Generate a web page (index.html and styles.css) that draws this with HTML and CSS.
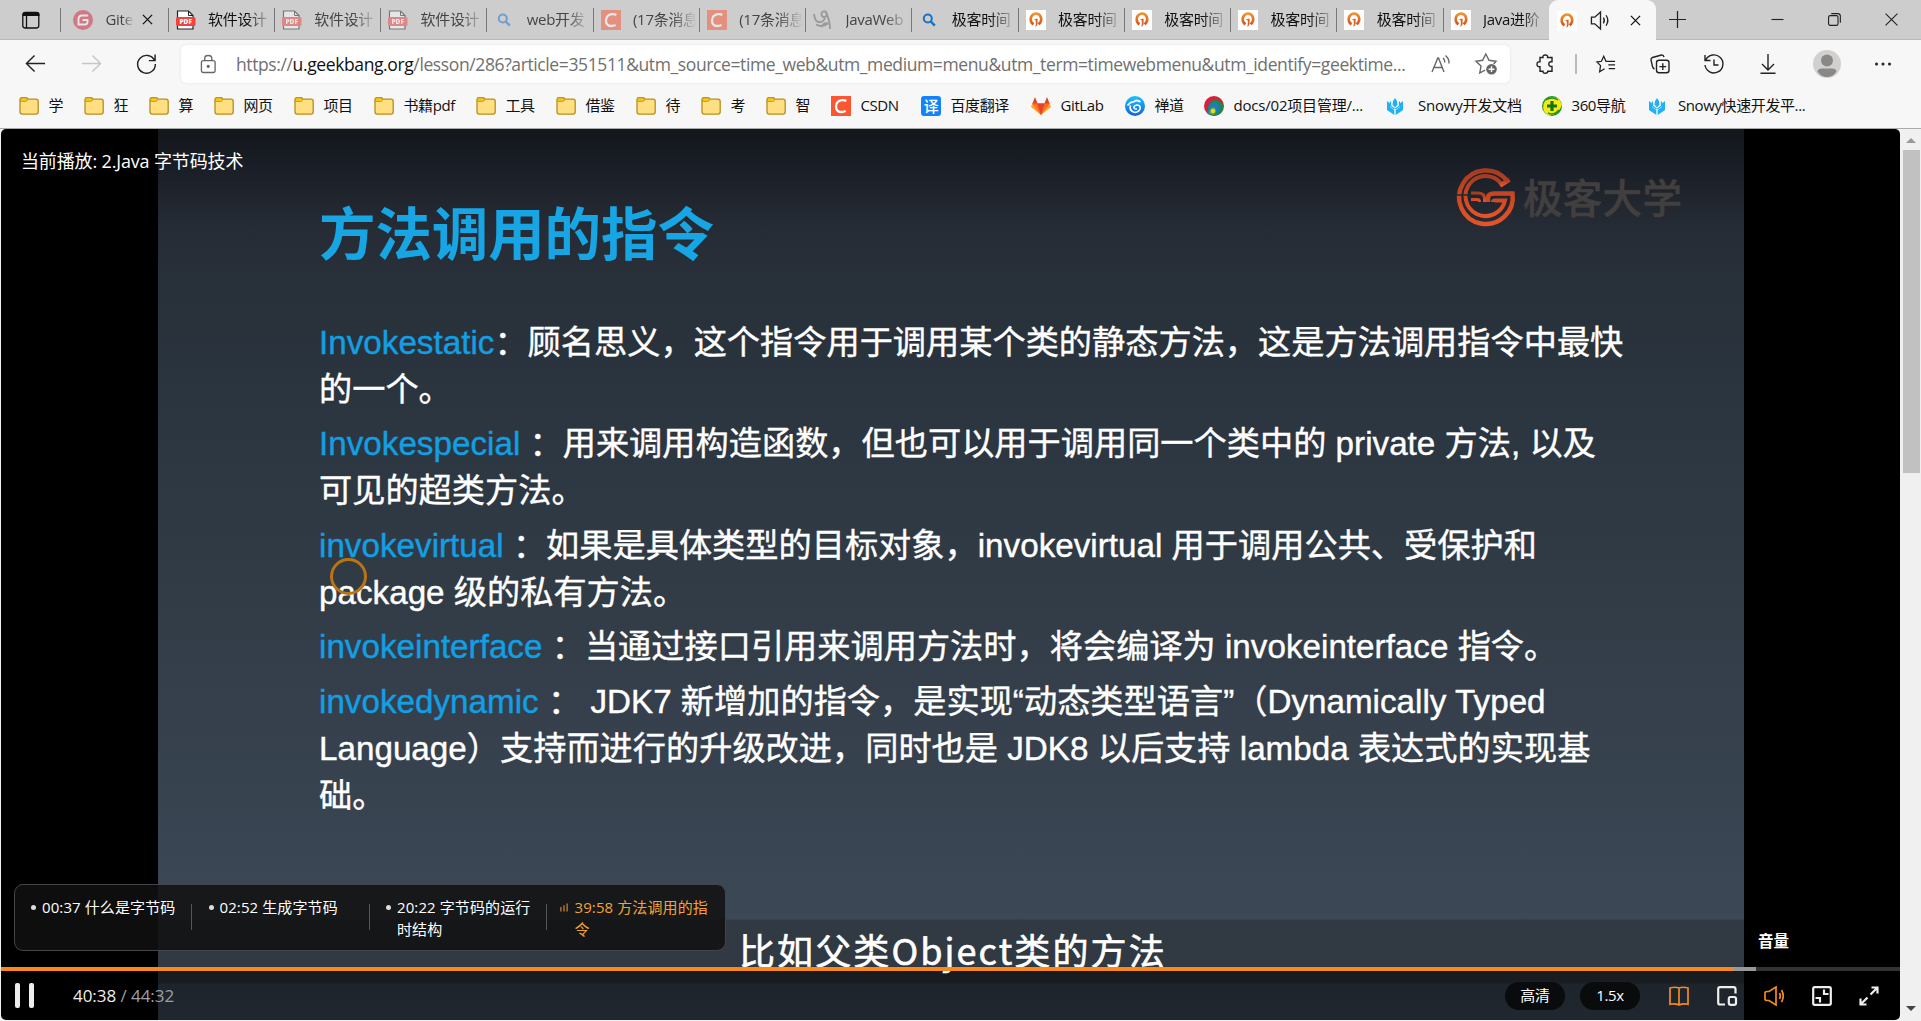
FILE: index.html
```html
<!DOCTYPE html>
<html lang="zh-CN">
<head>
<meta charset="utf-8">
<title>2.Java 字节码技术</title>
<link rel="stylesheet" href="styles.css">
</head>
<body>
<svg class="defs" width="0" height="0">
  <defs>
    <linearGradient id="og" x1="0" y1="0" x2="0" y2="1"><stop offset="0" stop-color="#f0932b"/><stop offset="1" stop-color="#d9531e"/></linearGradient>
    <linearGradient id="cg" x1="0" y1="0" x2="0" y2="1"><stop offset="0" stop-color="#19c2fb"/><stop offset="1" stop-color="#1263dc"/></linearGradient>
    <linearGradient id="lg" x1="0" y1="0" x2="0" y2="1"><stop offset="0" stop-color="#a43c22"/><stop offset=".5" stop-color="#cc4722"/><stop offset="1" stop-color="#e4532a"/></linearGradient>
    <symbol id="folder" viewBox="0 0 20 20"><path d="M1 4.2Q1 1.6 3 1.6H7Q8.6 1.6 8.8 3.2H17Q19.2 3.2 19.2 5.400V15.800Q19.200 18.200 17 18.200H3.200Q1 18.200 1 15.800Z" fill="#ffdf82" stroke="#b58f1e" stroke-width="1.300"/><path d="M1.300 4.200Q1.300 1.800 3 1.800H7Q8.500 1.800 8.500 3.600Q8.300 5.400 6.500 5.400H1.300Z" fill="#f9c816" stroke="#b58f1e" stroke-width=".8"/></symbol>
    <symbol id="pdf" viewBox="0 0 20 20"><path d="M1.500 9V1H12.500L17 5.500V19H1.500V15" fill="#fff" stroke="#222" stroke-width="1.200"/><path d="M12.500 1V5.500H17" fill="none" stroke="#222"/><rect x="0" y="7" width="19.500" height="9" rx="1.500" fill="#f3413e"/><text x="9.700" y="14" text-anchor="middle" class="pdf-t">PDF</text></symbol>
    <symbol id="geek" viewBox="0 0 20 20"><rect width="20" height="20" fill="#fff"/><path d="M7.500 14.300A5.300 5.700 0 1 1 14.200 12.600L12.600 14.200" fill="none" stroke="url(#og)" stroke-width="2.700"/><path d="M8 9.300L11.600 8.600V14Q11.400 16 9 16.800Q9.800 15.500 9.800 14V10.400Z" fill="#dd6321"/></symbol>
    <symbol id="search" viewBox="0 0 20 20"><circle cx="8.800" cy="8.500" r="4" fill="none" stroke="#1673c8" stroke-width="2"/><path d="M11.800 11.500L15.800 15.700" stroke="#1673c8" stroke-width="2.400"/></symbol>
    <symbol id="csdn" viewBox="0 0 20 20"><rect width="20" height="20" fill="#fc5531"/><path d="M15.300 4.900Q13.500 4 11 4.200Q5.300 4.800 5 10.500Q5 16 10 16Q12.500 16 14.600 15" fill="none" stroke="#fff" stroke-width="2.300"/></symbol>
    <symbol id="snowy" viewBox="0 0 20 20"><path d="M9 2Q11.500 4.500 11.500 8.500L9 11.500L6.500 8.500Q6.500 4.500 9 2ZM1 5L4 7.500V11L8.300 14V19L1 14ZM17 5L14 7.500V11L9.700 14V19L17 14Z" fill="#1fb0f5"/><path d="M4.500 5.500V10L8.500 13M13.500 5.500V10L9.500 13" fill="none" stroke="#1fb0f5" stroke-width="1.300"/></symbol>
  </defs>
</svg>

<div class="browser">
  <div class="tabs">
    <div class="tab-menu"><svg width="20" height="20" viewBox="0 0 20 20"><rect x="1.800" y="2.500" width="16" height="15.500" rx="2.500" fill="none" stroke="#111" stroke-width="1.300"/><path d="M1.500 6V4Q1.500 2 4 2H16Q18.500 2 18.500 4V6Z" fill="#111"/><path d="M5.500 6V18" stroke="#111" stroke-width="1.300"/></svg></div>
    <div class="tab first"><svg class="fav dim" viewBox="0 0 20 20"><circle cx="10" cy="10" r="10" fill="#d3263f"/><path d="M15.200 5.500H9Q5.500 5.500 5.500 9V14.500H12Q14.500 14.500 14.500 12V10H9.500" fill="none" stroke="#fff" stroke-width="1.900"/></svg><span class="label gray short">Gite</span><svg class="close" viewBox="0 0 12 12"><path d="M1 1L11 11M11 1L1 11"/></svg></div>
    <div class="tab"><svg class="fav"><use href="#pdf"/></svg><span class="label">软件设计</span></div>
    <div class="tab"><svg class="fav dim"><use href="#pdf"/></svg><span class="label gray">软件设计</span></div>
    <div class="tab"><svg class="fav dim"><use href="#pdf"/></svg><span class="label gray">软件设计</span></div>
    <div class="tab"><svg class="fav dim"><use href="#search"/></svg><span class="label gray">web开发</span></div>
    <div class="tab"><svg class="fav dim"><use href="#csdn"/></svg><span class="label gray">(17条消息</span></div>
    <div class="tab"><svg class="fav dim"><use href="#csdn"/></svg><span class="label gray">(17条消息</span></div>
    <div class="tab"><svg class="fav" viewBox="0 0 20 20" fill="none" stroke="#999" stroke-width="1.800"><path d="M1 4Q2 11 5 12Q10 13 12 8M12.500 1.500Q8 1 8.500 5Q9.500 8 13 6.500Q15 4 12.500 1.500Q17 10 17 19M8.500 17Q11 12 15 13.500M3 14.500Q9 18 15 13.500"/></svg><span class="label gray">JavaWeb</span></div>
    <div class="tab"><svg class="fav"><use href="#search"/></svg><span class="label">极客时间</span></div>
    <div class="tab"><svg class="fav"><use href="#geek"/></svg><span class="label">极客时间</span></div>
    <div class="tab"><svg class="fav"><use href="#geek"/></svg><span class="label">极客时间</span></div>
    <div class="tab"><svg class="fav"><use href="#geek"/></svg><span class="label">极客时间</span></div>
    <div class="tab"><svg class="fav"><use href="#geek"/></svg><span class="label">极客时间</span></div>
    <div class="tab"><svg class="fav"><use href="#geek"/></svg><span class="label">Java进阶</span></div>
    <div class="tab active"><svg class="fav"><use href="#geek"/></svg><svg class="sound" viewBox="0 0 22 22"><path d="M1.500 7.500H5L11 2V20L5 14.500H1.500ZM14 8Q16 11 14 14M16.800 5.500Q20.500 11 16.800 16.500"/></svg><svg class="close" viewBox="0 0 12 12"><path d="M1 1L11 11M11 1L1 11"/></svg></div>
    <svg class="plus" viewBox="0 0 18 18"><path d="M9 0V18M0 9H18"/></svg>
    <div class="win">
      <svg viewBox="0 0 14 14"><path d="M.5 7H13.500"/></svg>
      <svg viewBox="0 0 14 14"><rect x=".6" y="2.800" width="10.200" height="10.500" rx="1.800"/><path d="M3.500 .7H10.500Q13.300 .7 13.300 3.500V10.500"/></svg>
      <svg viewBox="0 0 14 14"><path d="M.6 .6L13.400 13.400M13.400 .6L.6 13.400"/></svg>
    </div>
  </div>

  <div class="toolbar">
    <div class="nav">
      <svg viewBox="0 0 22 22"><path d="M21 11H1.500M10 2.500L1.500 11L10 19.500"/></svg>
      <svg class="off" viewBox="0 0 22 22"><path d="M1 11H20.500M12 2.500L20.500 11L12 19.500"/></svg>
      <svg viewBox="0 0 22 22"><path d="M19.500 8A9.300 9.300 0 1 0 20.300 11.500M20 1.500V8H13.500"/></svg>
    </div>
    <div class="address">
      <svg class="lock" viewBox="0 0 18 20"><rect x="1.500" y="6.500" width="14.500" height="12.500" rx="2"/><path d="M5 6.500V4Q5 1 8.700 1T12.500 4V6.500"/><circle cx="8.700" cy="12.500" r="1" fill="#555"/></svg>
      <div class="url">https://<b>u.geekbang.org</b>/lesson/286?article=351511&amp;utm_source=time_web&amp;utm_medium=menu&amp;utm_term=timewebmenu&amp;utm_identify=geektime...</div>
      <svg class="aloud" viewBox="0 0 20 20"><path d="M1 18L6.800 4H7.500L13 18M3 13.500H11.300M12 4Q14 6 13.800 8.500M14.500 1.500Q18.500 5 18 9.500"/></svg>
      <svg class="star" viewBox="0 0 22 22"><path d="M18.700 11L21 8.300L14 7.300L10.800 1L7.600 7.300L1 8.300L6 13L4.800 20L10 17.200"/><circle cx="16.500" cy="16.200" r="5.300" fill="#666" stroke="none"/><path d="M16.500 13.300V19.100M13.600 16.200H19.400" stroke="#fff"/></svg>
    </div>
    <div class="tools">
      <svg viewBox="0 0 20 20"><path d="M5 3.500H8Q7.500 1 10.300 1T12.500 3.500H17V7.800Q13.800 7.300 13.800 10T17 12.500V17.300H12.800Q12.800 19.300 10.300 19.300T8 17.300H5V12.800Q2 13 2 10.300T5 7.800Z"/></svg>
      <i class="sep"></i>
      <svg viewBox="0 0 22 20"><path d="M14 7H11L8.500 1.500L6 7L1 7.800L5 11.800L4 18.500L9.500 15.300M12.500 7H21M13.500 11H21M14 15H21"/></svg>
      <svg viewBox="0 0 20 20"><rect x="6.500" y="6.300" width="12.500" height="12.500" rx="2.500"/><path d="M12.800 9.200V16M9.400 12.600H16.200M4.500 15Q3 14.500 2.500 12.500L1 6Q.8 4 2.500 3.500L11.500 1Q13.500 .8 14 3"/></svg>
      <svg viewBox="0 0 20 20"><path d="M1 1V6.500H6.500M1.800 6A9 9 0 1 1 1 11M10 5.500V11H14.500"/></svg>
      <svg viewBox="0 0 20 20"><path d="M10 0V15.500M4 10L10 16L16 10M2.500 19.300H17.500"/></svg>
      <svg class="avatar" viewBox="0 0 28 28"><circle cx="14" cy="14" r="14" fill="#d2d0ce" stroke="none"/><circle cx="14" cy="10.500" r="6" fill="#8a8886" stroke="none"/><path d="M4.500 21.500Q5 18.500 9 18.500H19Q23 18.500 23.500 21.500Q20 27 14 27T4.500 21.500Z" fill="#8a8886" stroke="none"/></svg>
      <svg viewBox="0 0 20 20"><g fill="#222" stroke="none"><circle cx="3.500" cy="10" r="1.500"/><circle cx="10" cy="10" r="1.500"/><circle cx="16.500" cy="10" r="1.500"/></g></svg>
    </div>
  </div>

  <div class="bookmarks">
    <span class="bm w15"><svg><use href="#folder"/></svg>学</span>
    <span class="bm w15"><svg><use href="#folder"/></svg>狂</span>
    <span class="bm w15"><svg><use href="#folder"/></svg>算</span>
    <span class="bm w30"><svg><use href="#folder"/></svg>网页</span>
    <span class="bm w30"><svg><use href="#folder"/></svg>项目</span>
    <span class="bm wpdf"><svg><use href="#folder"/></svg>书籍pdf</span>
    <span class="bm w30"><svg><use href="#folder"/></svg>工具</span>
    <span class="bm w30"><svg><use href="#folder"/></svg>借鉴</span>
    <span class="bm w15"><svg><use href="#folder"/></svg>待</span>
    <span class="bm w15"><svg><use href="#folder"/></svg>考</span>
    <span class="bm w15"><svg><use href="#folder"/></svg>智</span>
    <span class="bm wcsdn"><svg><use href="#csdn"/></svg>CSDN</span>
    <span class="bm wfy"><svg viewBox="0 0 20 20"><rect width="20" height="20" rx="3" fill="#1283fb"/><text x="10" y="15.500" text-anchor="middle" class="yi">译</text></svg>百度翻译</span>
    <span class="bm wgit"><svg viewBox="0 0 20 20"><path d="M10 19L0 11L1.300 7.500H18.700L20 11Z" fill="#fca326"/><path d="M10 19L1.300 7.500H18.700Z" fill="#fc6d26"/><path d="M1.300 7.800L4 1L6.700 7.800ZM18.700 7.800L16 1L13.300 7.800ZM10 19L6.300 7.500H13.700Z" fill="#e24329"/></svg>GitLab</span>
    <span class="bm w30 zen"><svg viewBox="0 0 20 20"><circle cx="10" cy="10" r="10" fill="url(#cg)"/><path d="M2.500 9.500Q6 5.500 8.500 6Q11.500 3 15.500 6M9 12.500Q8.500 9.500 12 9Q16 9.500 15 13Q13 17.300 8.500 16Q4 14 5.500 9.500M12 13H9.500" fill="none" stroke="#fff" stroke-width="1.700"/></svg>禅道</span>
    <span class="bm wdocs"><svg viewBox="0 0 20 20"><circle cx="10" cy="10" r="10" fill="#d4213c"/><path d="M3 17A10 10 0 0 0 19 14Q20 6 13 4Q4 3 3 17Z" fill="#178b4b"/><path d="M4 18Q3 7 11 6Q17 8 15 15Q11 20 4 18Z" fill="#1f7ac0"/><path d="M5 18Q5 11 10 11Q14 14 10 19Z" fill="#5da03b"/><circle cx="9" cy="15" r="2.300" fill="#e0dc20"/></svg>docs/02项目管理/...</span>
    <span class="bm wsn1"><svg><use href="#snowy"/></svg>Snowy开发文档</span>
    <span class="bm w360"><svg viewBox="0 0 20 20"><circle cx="10" cy="10" r="10" fill="#21901c"/><path d="M15 2Q5-1 1.500 8Q0 16 6 19Q14 20 18 13L20 9Q18 3 15 2Z" fill="#f6ea14"/><path d="M16 4Q10 0 4 4M17 14Q12 20 6 17" stroke="#21901c" stroke-width="1.500" fill="none"/><path d="M10 5V15M5 10H15" stroke="#157412" stroke-width="3.200"/></svg>360导航</span>
    <span class="bm wsn2"><svg><use href="#snowy"/></svg>Snowy快速开发平...</span>
  </div>

  <div class="page">
    <div class="player">
      <div class="slide">
        <div class="logo">
          <svg width="60" height="60" viewBox="0 0 60 60" fill="none" stroke="url(#lg)"><path d="M50.500 14A26.800 26.800 0 1 0 56.500 27.500H38Q32 27.500 32 32V36" stroke-width="4.500"/><path d="M45.500 18A20 20 0 1 0 49 34.500H39Q37 34.500 37 36" stroke-width="4"/><path d="M15 27H22Q28.500 27 28.500 32V36M15 33.500H21.500Q23.500 33.500 23.500 36" stroke-width="3"/><path d="M44 19.500L53.500 13.500" stroke-width="4.500"/><path d="M0 29H13" stroke="#222932" stroke-width="1.300"/></svg>
          <span>极客大学</span>
        </div>
        <h1>方法调用的指令</h1>
        <div class="copy">
          <p><em>Invokestatic</em>：顾名思义，这个指令用于调用某个类的静态方法，这是方法调用指令中最快<br>的一个。</p>
          <p><em>Invokespecial</em> ：用来调用构造函数，但也可以用于调用同一个类中的 private 方法, 以及<br>可见的超类方法。</p>
          <p><em>invokevirtual</em> ：如果是具体类型的目标对象，invokevirtual 用于调用公共、受保护和<br>package 级的私有方法。</p>
          <p><em>invokeinterface</em> ：当通过接口引用来调用方法时，将会编译为 invokeinterface 指令。</p>
          <p><em>invokedynamic</em> ： JDK7 新增加的指令，是实现“动态类型语言”（Dynamically Typed<br>Language）支持而进行的升级改进，同时也是 JDK8 以后支持 lambda 表达式的实现基<br>础。</p>
        </div>
        <div class="caption">比如父类Object类的方法</div>
      </div>
      <div class="pointer"></div>
      <div class="playing">当前播放: 2.Java 字节码技术</div>
      <div class="chapters">
        <div class="chapter"><i class="dot"></i><span>00:37 什么是字节码</span></div>
        <div class="chapter"><i class="dot"></i><span>02:52 生成字节码</span></div>
        <div class="chapter"><i class="dot"></i><span>20:22 字节码的运行<br>时结构</span></div>
        <div class="chapter on"><svg class="eq" viewBox="0 0 9 9"><path d="M1 4V9M4.500 2V9M8 0V9"/></svg><span>39:58 方法调用的指<br>令</span></div>
      </div>
      <div class="tip">音量</div>
      <div class="progress"><i class="done"></i><i class="buffer"></i></div>
      <div class="controls">
        <div class="pause"><i></i><i></i></div>
        <div class="time"><b>40:38</b> / 44:32</div>
        <div class="right">
          <span class="pill">高清</span>
          <span class="pill">1.5x</span>
          <svg class="orange book" viewBox="0 0 20 20"><path d="M1 2Q6 .5 10 2Q14 .5 19 2V18.300Q14 17 10 19Q6 17 1 18.300ZM10 2V18.500"/></svg>
          <svg viewBox="0 0 20 20"><path d="M8 18.500H3Q1.200 18.500 1.200 16.700V3Q1.200 1.200 3 1.200H16.500Q18.500 1.200 18.500 3V7.500M12.500 11H17Q19 11 19 13V17Q19 18.800 17 18.800H14Q11.800 18.800 11.800 17V13Q11.800 11 13.500 11Z"/></svg>
          <svg class="orange" viewBox="0 0 20 20"><path d="M1 7Q1 5.500 3 5.500H5L12 1V19L5 14.500H3Q1 14.500 1 13ZM15.500 7Q17 10 15.500 13M17.500 4Q21 10 17.500 16"/></svg>
          <svg viewBox="0 0 20 20"><rect x="1.200" y="1.200" width="17.600" height="17.600" rx="1.500"/><path d="M12 3.500V8H16.500M3.500 12H8V16.500"/></svg>
          <svg viewBox="0 0 20 20"><path d="M12.500 1.500H18.500V7.500M18 2L11.500 8.500M1.500 12.500V18.500H7.500M2 18L8.500 11.500"/></svg>
        </div>
      </div>
    </div>
    <div class="scroll"><i class="up"></i><i class="thumb"></i><i class="down"></i></div>
  </div>
</div>
</body>
</html>
```
FILE: styles.css
```css
* { box-sizing: border-box; }
body { margin: 0; width: 1921px; height: 1021px; overflow: hidden; background: #f7f7f7; color: #111; font: 15px/20px "Open Sans", "Noto Sans CJK SC", sans-serif; }
svg { flex: none; overflow: visible; }
.defs { position: absolute; }
.pdf-t { font: 800 6.5px "Open Sans", sans-serif; fill: #fff; }
.yi { font: 500 15px "Noto Sans CJK SC", sans-serif; fill: #fff; }
.browser { display: flex; flex-direction: column; height: 1021px; }

/* tab strip */
.tabs { display: flex; align-items: center; height: 40px; background: #cdcdcd; border-bottom: 1px solid #b9b9b9; }
.tab-menu { width: 60px; padding-left: 21px; height: 20px; }
.tab { display: flex; align-items: center; width: 106.25px; height: 24px; padding-left: 7px; border-left: 1.500px solid #777; }
.tab.first { width: 107.500px; padding-left: 12px; }
.fav { width: 20px; height: 20px; }
.dim { opacity: .5; }
.label { width: 64px; height: 21px; margin-left: 12.500px; white-space: nowrap; letter-spacing: -.3px; -webkit-mask-image: linear-gradient(90deg, #000 60%, transparent 100%); mask-image: linear-gradient(90deg, #000 60%, transparent 100%); }
.label.short { width: 28px; }
.gray { color: #444; }
.close { width: 11px; height: 11px; fill: none; stroke: #111; stroke-width: 1.400; margin-left: 8px; }
.tab.active { width: 107px; height: 41px; margin-bottom: -2px; padding-left: 8px; background: #f7f7f7; border: 0; border-radius: 9px 9px 0 0; }
.sound { width: 21px; height: 21px; margin-left: 13px; fill: none; stroke: #222; stroke-width: 1.400; }
.active .close { margin-left: 19px; }
.plus { width: 17px; height: 17px; margin-left: 13px; fill: none; stroke: #222; stroke-width: 1.300; }
.win { display: flex; gap: 44px; margin-left: 85px; }
.win svg { width: 13px; height: 13px; fill: none; stroke: #222; stroke-width: 1.200; }

/* navigation bar */
.toolbar { display: flex; align-items: center; height: 47px; padding-left: 25px; }
.nav { display: flex; gap: 34.500px; width: 156px; }
.nav svg { width: 21px; height: 21px; fill: none; stroke: #222; stroke-width: 1.500; }
.nav .off { stroke: #c6c6c6; }
.address { display: flex; align-items: center; width: 1329px; height: 38px; padding-left: 19px; border-radius: 6px; background: #fff; box-shadow: 0 0 3px #e2e2e2; }
.address svg { fill: none; stroke: #666; stroke-width: 1.400; }
.lock { width: 17px; height: 20px; }
.url { width: 1195px; margin-left: 19px; white-space: nowrap; color: #707070; font-size: 17.500px; letter-spacing: -.385px; }
.url b { font-weight: 400; color: #111; }
.aloud { width: 20px; height: 20px; }
.star { width: 22px; height: 22px; margin-left: 24px; }
.tools { display: flex; align-items: center; gap: 34.200px; padding-left: 25px; }
.tools svg { width: 20px; height: 20px; fill: none; stroke: #222; stroke-width: 1.400; }
.tools .avatar { width: 28px; height: 28px; }
.tools svg:last-child { margin-left: -2px; }
.sep { width: 2px; height: 20px; background: #bbb; margin: 0 -15px 0 -14.500px; }

/* bookmarks */
.bookmarks { display: flex; height: 42px; padding: 8px 0 0 19px; border-bottom: 1px solid #aaa; }
.bm { display: flex; align-items: center; gap: 9.500px; flex: none; height: 21px; white-space: nowrap; letter-spacing: -.4px; line-height: 21px; }
.bm svg { width: 20px; height: 20px; }
.w15 { width: 65px; } .w30 { width: 80px; } .wpdf { width: 102px; } .wcsdn { width: 90px; } .wfy { width: 110px; }
.wgit { width: 94px; } .zen { width: 79px; } .wdocs { width: 183px; letter-spacing: -.2px; } .wsn1 { width: 155px; } .w360 { width: 107px; } .wsn2 { width: 170px; }
.wsn1, .wsn2 { gap: 12px; letter-spacing: -.2px; }
.wsn2 { gap: 10px; letter-spacing: -.4px; }
.wsn1 svg, .wsn2 svg { margin-left: -1px; }

/* player */
.page { display: flex; flex: 1; padding: 0 0 1px 1px; background: #f0f0f0; }
.player { position: relative; width: 1899px; height: 891px; overflow: hidden; border-radius: 5px; background: #000; color: #fff; }
.slide { width: 1586px; height: 891px; margin-left: 157px; padding: 66px 0 0 161px; position: relative;
  background: linear-gradient(180deg, #13171b 0, #1a1e27 40px, #262c35 100px, #28313a 170px, #2b353f 270px, #323c47 470px, #384350 670px, #3c4856 790px, #323943 791px, #313944 837px, #181b1f 842px, #191c20 854px, #1e242b 855px, #20272f 891px); }
h1 { margin: 0; width: 500px; font: 700 56.500px/70px "Noto Sans CJK SC", sans-serif; color: #18a5e4; white-space: nowrap; letter-spacing: -.1px; }
.copy { margin-top: 55px; font: 33.200px/46.600px "Liberation Sans", "Noto Sans CJK SC", sans-serif; white-space: nowrap; text-spacing-trim: space-all; letter-spacing: .015px; -webkit-text-stroke: .4px currentColor; }
.copy p { margin: 0 0 8.300px; }
.copy em { font-style: normal; color: #129fe3; }
.logo { position: absolute; left: 1298px; top: 37px; display: flex; align-items: center; gap: 7px; color: #423f3f; font: 500 39.500px/50px "Noto Sans CJK SC", sans-serif; letter-spacing: .3px; white-space: nowrap; -webkit-text-stroke: .5px currentColor; }
.caption { position: absolute; left: 581px; top: 793px; font: 36px/54px "Noto Sans CJK SC", sans-serif; letter-spacing: 2.100px; white-space: nowrap; -webkit-text-stroke: .6px currentColor; }
.pointer { position: absolute; left: 329px; top: 429px; width: 37px; height: 37px; border: 3px solid #b87415; border-radius: 50%; }
.playing { position: absolute; left: 20px; top: 22px; font-size: 18px; letter-spacing: -.15px; }
.chapters { position: absolute; left: 13px; top: 755px; width: 712px; height: 67px; display: flex; padding-top: 11px; border: 1px solid #454549; border-radius: 9px; background: rgba(17,17,17,.85); line-height: 22px; letter-spacing: .1px; white-space: nowrap; }
.chapter { position: relative; display: flex; width: 177.500px; padding-left: 27px; }
.chapter + .chapter::before { content: ""; position: absolute; left: -1.500px; top: 8px; width: 1px; height: 26px; background: #55565a; }
.dot { position: absolute; left: 16px; top: 9px; width: 5px; height: 5px; border-radius: 50%; background: #ddd; }
.eq { position: absolute; left: 12px; top: 7px; width: 8px; height: 9px; stroke: #d98b2b; stroke-width: 1.300; }
.on { color: #f4a236; }
.tip { position: absolute; left: 1757px; top: 802px; font-weight: 700; font-size: 15.500px; }
.progress { position: absolute; left: 0; top: 838px; width: 1899px; height: 4px; display: flex; background: #333; }
.done { width: 1733px; background: #fa8919; }
.buffer { width: 22px; background: #999; }
.controls { position: absolute; left: 0; bottom: 0; width: 1899px; height: 49px; display: flex; align-items: center; }
.pause { display: flex; gap: 9px; padding-left: 14px; width: 72px; }
.pause i { width: 5px; height: 25px; border-radius: 2px; background: #eee; }
.time { color: #9ba0a6; font-size: 17px; letter-spacing: -.05px; white-space: nowrap; }
.time b { font-weight: 400; color: #eee; }
.right { display: flex; align-items: center; margin-left: auto; padding-right: 21px; }
.right svg { width: 20px; height: 20px; margin-left: 27.500px; fill: none; stroke: #eee; stroke-width: 2.200; }
.right .orange { stroke: #f58a1f; stroke-width: 1.700; }
.right .book { margin-left: 29px; }
.pill { width: 60px; height: 28px; margin-left: 15px; border-radius: 14px; background: #090b0c; text-align: center; line-height: 27px; letter-spacing: -.3px; }
.scroll { display: flex; flex-direction: column; align-items: center; width: 21px; height: 891px; padding: 9px 1px 9px 2px; background: #f0f0f0; }
.up { border: 5px solid transparent; border-top: 0; border-bottom: 5px solid #999; }
.thumb { width: 17px; height: 323px; margin-top: 7px; background: #c1c1c1; }
.down { margin-top: auto; border: 5px solid transparent; border-bottom: 0; border-top: 5px solid #444; }
```
